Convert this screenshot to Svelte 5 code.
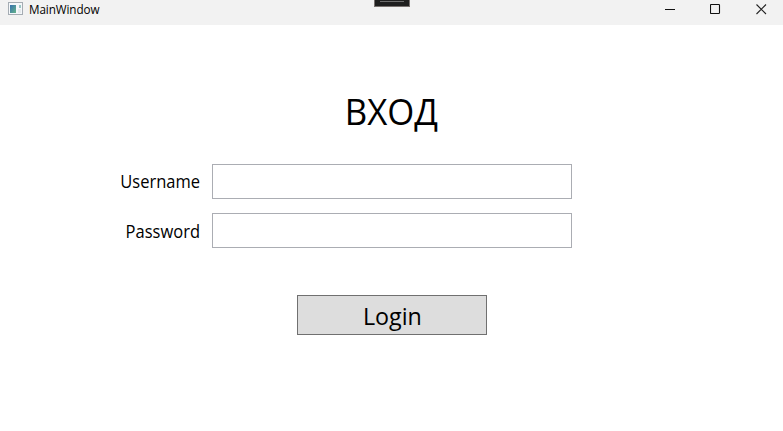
<script>
  let username = $state('');
  let password = $state('');
</script>

<div class="window">
  <header class="titlebar">
    <svg class="app-icon" width="16" height="14" viewBox="0 0 16 14">
      <rect x="0.5" y="0.5" width="14" height="12" fill="#f4f7fa" stroke="#a5acb3" />
      <defs>
        <linearGradient id="pane" x1="0" y1="0" x2="1" y2="1">
          <stop offset="0" stop-color="#356fae" />
          <stop offset="1" stop-color="#65b48a" />
        </linearGradient>
      </defs>
      <rect x="2" y="3" width="6" height="8" fill="url(#pane)" />
      <rect x="11" y="3" width="2" height="3" fill="#9cc6c4" />
      <rect x="10" y="7" width="3" height="4" fill="#e5e9ec" />
    </svg>
    <span class="caption">MainWindow</span>
    <div class="controls">
      <svg width="11" height="11" viewBox="0 0 11 11"><path d="M0 5.5H10" stroke="#111" /></svg>
      <svg width="11" height="11" viewBox="0 0 11 11"><rect x="0.5" y="0.5" width="9" height="9" rx="0.8" fill="none" stroke="#111" stroke-width="1.1" /></svg>
      <svg width="11" height="11" viewBox="0 0 11 11"><path d="M0.5 0.5L10 10M10 0.5L0.5 10" stroke="#222" stroke-width="1.1" /></svg>
    </div>
    <div class="debug-tab"><i></i></div>
  </header>

  <main>
    <h1>ВХОД</h1>
    <form onsubmit={(e) => e.preventDefault()}>
      <div class="row">
        <label for="username">Username</label>
        <input id="username" type="text" bind:value={username} />
      </div>
      <div class="row">
        <label class="pw" for="password">Password</label>
        <input id="password" type="password" bind:value={password} />
      </div>
      <button type="submit"><span>Login</span></button>
    </form>
  </main>
</div>

<style>
  :global(body) {
    background: #fff;
  }
  .window {
    width: 783px;
    height: 431px;
    overflow: hidden;
    background: #fff;
    color: #000;
    font-family: 'Open Sans', 'Noto Sans', sans-serif;
  }
  .titlebar {
    position: relative;
    box-sizing: border-box;
    display: flex;
    height: 25px;
    padding-left: 8px;
    background: #f2f2f2;
  }
  .app-icon {
    margin-top: 2px;
  }
  .caption {
    margin-left: 5px;
    font-size: 12px;
    line-height: 19px;
    letter-spacing: -0.1px;
    transform: scaleX(0.975);
    transform-origin: left;
  }
  .controls {
    display: flex;
    gap: 34px;
    margin: 4px 16px 0 auto;
  }
  .controls svg:last-child {
    margin-left: 1px;
  }
  .debug-tab {
    position: absolute;
    top: 0;
    left: 374px;
    box-sizing: border-box;
    width: 36px;
    height: 7px;
    padding: 1px 5px;
    border: solid #77716f;
    border-width: 0 1px 1px;
    background: #1f1f1f;
  }
  .debug-tab i {
    display: block;
    height: 1px;
    background: #6d6d6d;
  }
  main {
    display: flex;
    flex-direction: column;
    align-items: center;
    padding-top: 62px;
  }
  h1 {
    margin: 0;
    font-size: 36px;
    font-weight: 400;
    line-height: 50px;
    transform: scaleX(0.965);
  }
  form {
    display: flex;
    flex-direction: column;
    width: 572px;
    margin: 27px 211px 0 0;
  }
  .row {
    display: flex;
    height: 35px;
    margin-bottom: 14px;
  }
  label {
    width: 200px;
    margin-right: 12px;
    font-size: 17.5px;
    line-height: 35px;
    text-align: right;
    transform: scaleX(0.943);
    transform-origin: right;
  }
  .pw {
    line-height: 37px;
  }
  input {
    box-sizing: border-box;
    width: 360px;
    height: 35px;
    padding: 0 6px;
    border: 1px solid #abadb3;
    border-radius: 0;
    outline: none;
    background: #fff;
    font: inherit;
    font-size: 18px;
  }
  button {
    box-sizing: border-box;
    width: 190px;
    height: 40px;
    margin: 33px 0 0 297px;
    padding: 2px 0 0;
    border: 1px solid #707070;
    border-radius: 0;
    background: #ddd;
    color: #000;
    font-family: inherit;
    font-size: 24px;
    line-height: 36px;
  }
  button span {
    display: inline-block;
    transform: scaleX(0.97);
  }
</style>
